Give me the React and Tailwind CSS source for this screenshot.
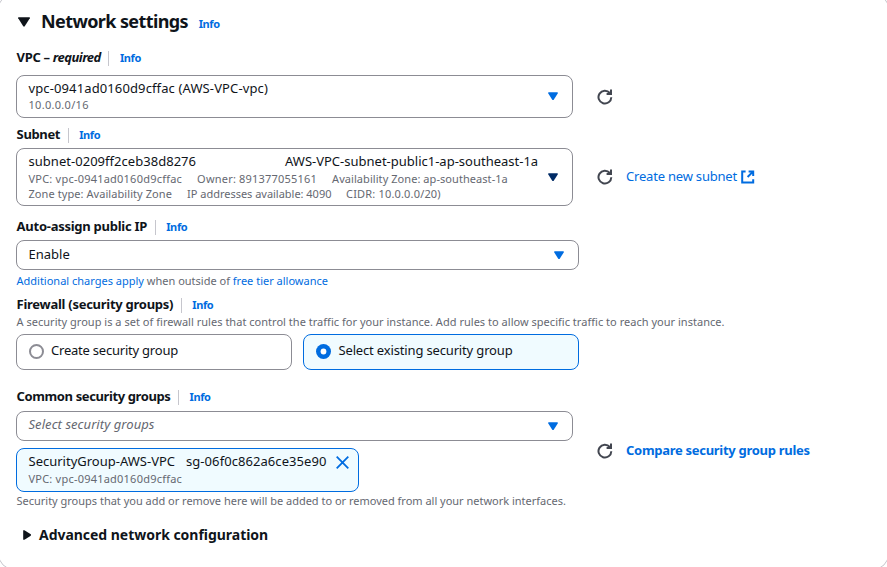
import React from "react";

function Caret({ className = "text-[#006ce0]" }) {
  return (
    <svg width="10" height="8" viewBox="0 0 10 8" className={`mb-px shrink-0 ${className}`}>
      <path d="M0.3 0.3h9.4v1.2L5.9 7.4a1.1 1.1 0 0 1-1.8 0L0.3 1.5z" fill="currentColor" />
    </svg>
  );
}

function Refresh() {
  return (
    <svg width="16" height="16" viewBox="0 0 16 16" fill="none" stroke="#424650" strokeWidth="2" className="shrink-0">
      <path d="M9.6 5h4.4V0.5" />
      <path d="M14.3 8.2A6.4 6.4 0 1 1 12.8 4" />
    </svg>
  );
}

function External() {
  return (
    <svg width="14" height="14" viewBox="0 0 14 14" fill="none" stroke="#006ce0" strokeWidth="2" className="shrink-0">
      <path d="M4.6 1.4H1.2v11.2h11V9.2" />
      <path d="M7.6 1.4h4.6V6M12 1.6L6.6 7" />
    </svg>
  );
}

function Info({ className = "" }) {
  return <a className={`text-[11px] font-bold tracking-[-0.39px] text-[#006ce0] ${className}`}>Info</a>;
}

function Label({ children, className = "" }) {
  return (
    <div className={`flex h-5 items-center pl-[0.6px] text-[13px] font-bold ${className}`}>
      <span>{children}</span>
      <span className="ml-[7.5px] h-[15px] w-px bg-[#c6c6cd]" />
      <Info className="ml-[10.6px] pt-px" />
    </div>
  );
}

export default function App() {
  return (
    <div className="h-[567px] w-[887px] overflow-hidden bg-white font-['Noto_Sans','Open_Sans',sans-serif] whitespace-nowrap text-[#0f141a]">
      <div className="-mx-[2px] -mt-[7px] h-[577px] rounded-2xl border border-[#c6c6cd] px-[17px] pt-[6px]">
        <div className="flex h-11 items-center">
          <svg width="12" height="10" viewBox="0 0 12 10" className="ml-[1.6px]">
            <path d="M0.2 0.3h11.6v0.9L6.9 9a1.1 1.1 0 0 1-1.8 0L0.2 1.2z" fill="#0f141a" />
          </svg>
          <h2 className="-mt-[2px] ml-[11.4px] text-[18px] leading-6 font-bold tracking-[-0.6px]">Network settings</h2>
          <Info className="ml-[10.6px] pt-[5px]" />
        </div>

        <Label className="mt-1 tracking-[-0.33px]">
          VPC – <i className="tracking-[-0.51px]">required</i>
        </Label>
        <div className="mt-[7px] flex items-center">
          <div className="flex h-[43px] w-[557px] items-center justify-between rounded-lg border border-[#8c8c94] pr-[14px] pl-[11.5px]">
            <div>
              <div className="-mt-px mb-px text-[13px] leading-4 tracking-[0.12px]">vpc-0941ad0160d9cffac (AWS-VPC-vpc)</div>
              <div className="text-[11px] leading-4 tracking-[0.3px] text-[#656871]">10.0.0.0/16</div>
            </div>
            <Caret />
          </div>
          <div className="ml-6"><Refresh /></div>
        </div>

        <Label className="mt-[7px] tracking-[-0.36px]">Subnet</Label>
        <div className="mt-[3px] flex items-center">
          <div className="flex h-[58px] w-[557px] items-center justify-between rounded-lg border border-[#8c8c94] pr-[14px] pl-[11.5px]">
            <div className="text-[11px] leading-[15px] text-[#656871]">
              <div className="mb-px flex text-[13px] leading-[18px] text-[#0f141a]">
                <span className="w-[256.5px] tracking-[0.03px]">subnet-0209ff2ceb38d8276</span>
                <span>AWS-VPC-subnet-public1-ap-southeast-1a</span>
              </div>
              <div className="flex">
                <span className="w-[168.6px] tracking-[0.22px]">VPC: vpc-0941ad0160d9cffac</span>
                <span className="w-[135px] tracking-[0.2px]">Owner: 891377055161</span>
                <span className="tracking-[0.06px]">Availability Zone: ap-southeast-1a</span>
              </div>
              <div className="flex pb-px">
                <span className="w-[158.6px] tracking-[0.07px]">Zone type: Availability Zone</span>
                <span className="w-[159px] tracking-[-0.02px]">IP addresses available: 4090</span>
                <span className="tracking-[0.17px]">CIDR: 10.0.0.0/20)</span>
              </div>
            </div>
            <Caret className="text-[#002b66]" />
          </div>
          <div className="ml-6"><Refresh /></div>
          <a className="ml-[13px] text-[13px] tracking-[-0.2px] text-[#006ce0]">Create new subnet</a>
          <div className="ml-1"><External /></div>
        </div>

        <Label className="mt-[11px] tracking-[-0.26px]">Auto-assign public IP</Label>
        <div className="mt-[3px] flex h-[30px] w-[563px] items-center justify-between rounded-lg border border-[#8c8c94] pr-[14px] pl-[11.5px] text-[13px]">
          Enable
          <Caret />
        </div>
        <div className="mt-[3px] h-4 pl-[0.5px] text-[11px] leading-4 text-[#656871]">
          <a className="text-[#006ce0]">Additional charges apply</a> when outside of <a className="text-[#006ce0]">free tier allowance</a>
        </div>

        <Label className="mt-[6px] tracking-[-0.27px]">Firewall (security groups)</Label>
        <p className="-mt-px h-4 pl-[0.5px] text-[11px] leading-4 tracking-[0.024px] text-[#656871]">
          A security group is a set of firewall rules that control the traffic for your instance. Add rules to allow specific traffic to reach your instance.
        </p>
        <div className="mt-1 flex gap-[11px] text-[13px]">
          <label className="flex h-9 w-[276px] items-center gap-[7px] rounded-lg border border-[#8c8c94] pl-3 tracking-[-0.22px]">
            <span className="-mt-px size-[15px] rounded-full border-2 border-[#8c8c94]" />
            <span className="pb-0.5">Create security group</span>
          </label>
          <label className="flex h-9 w-[276px] items-center gap-[7.5px] rounded-lg border border-[#006ce0] bg-[#f0fbff] pl-3 tracking-[-0.157px]">
            <svg width="15" height="15" viewBox="0 0 15 15" className="-mt-px">
              <circle cx="7.5" cy="7.5" r="7.5" fill="#006ce0" />
              <circle cx="7.5" cy="7.5" r="2.9" fill="#ffffff" />
            </svg>
            <span className="pb-0.5">Select existing security group</span>
          </label>
        </div>

        <div className="mt-[17px] flex items-center">
          <div className="w-[557px]">
            <Label className="tracking-[-0.39px]">Common security groups</Label>
            <div className="mt-1 flex h-[30px] items-center justify-between rounded-lg border border-[#8c8c94] pr-[14px] pl-[11.5px] text-[13px] tracking-[0.058px] text-[#656871] italic">
              <span className="pb-0.5">Select security groups</span>
              <Caret />
            </div>
            <div className="mt-[7px] flex h-11 w-[343px] justify-between rounded-lg border border-[#006ce0] bg-[#f0fbff] pt-[3px] pr-[9px] pl-[11.5px]">
              <div>
                <div className="flex text-[13px] leading-[18px]">
                  <span className="w-[157.5px]">SecurityGroup-AWS-VPC</span>
                  <span className="tracking-[0.07px]">sg-06f0c862a6ce35e90</span>
                </div>
                <div className="mt-px text-[11px] leading-4 tracking-[0.22px] text-[#656871]">VPC: vpc-0941ad0160d9cffac</div>
              </div>
              <svg width="13" height="13" viewBox="0 0 13 13" className="mt-1" stroke="#006ce0" strokeWidth="1.8">
                <path d="M0.7 0.7l11.6 11.6M12.3 0.7L0.7 12.3" />
              </svg>
            </div>
            <p className="mt-px h-4 pl-[0.5px] text-[11px] leading-4 tracking-[-0.01px] text-[#656871]">
              Security groups that you add or remove here will be added to or removed from all your network interfaces.
            </p>
          </div>
          <div className="ml-6 pt-[6px]"><Refresh /></div>
          <a className="ml-[13px] pt-[5px] text-[13px] font-bold tracking-[-0.29px] text-[#006ce0]">Compare security group rules</a>
        </div>

        <div className="mt-[15px] flex h-5 items-center">
          <svg width="8" height="10" viewBox="0 0 8 10" className="mt-[2px] ml-[6.6px]">
            <path d="M0.2 0.2v9.6h1.2L7.4 5.9a1.1 1.1 0 0 0 0-1.8L1.4 0.2z" fill="#0f141a" />
          </svg>
          <h3 className="ml-[8.4px] text-[14px] font-bold tracking-[-0.03px]">Advanced network configuration</h3>
        </div>
      </div>
    </div>
  );
}
